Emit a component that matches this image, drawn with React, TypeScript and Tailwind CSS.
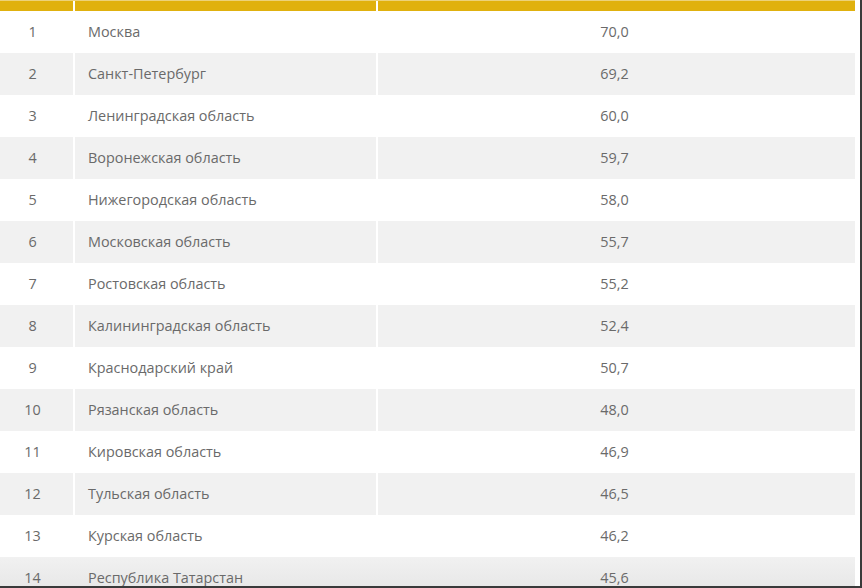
import React from 'react';

const rows: [number, string, string][] = [
  [1, 'Москва', '70,0'],
  [2, 'Санкт-Петербург', '69,2'],
  [3, 'Ленинградская область', '60,0'],
  [4, 'Воронежская область', '59,7'],
  [5, 'Нижегородская область', '58,0'],
  [6, 'Московская область', '55,7'],
  [7, 'Ростовская область', '55,2'],
  [8, 'Калининградская область', '52,4'],
  [9, 'Краснодарский край', '50,7'],
  [10, 'Рязанская область', '48,0'],
  [11, 'Кировская область', '46,9'],
  [12, 'Тульская область', '46,5'],
  [13, 'Курская область', '46,2'],
  [14, 'Республика Татарстан', '45,6'],
];

const App: React.FC = () => {
  return (
    <div className="w-[862px] h-[588px] bg-white border-r-2 border-b-2 border-[#3a3a3a] overflow-hidden font-['Open_Sans',sans-serif] text-[14.4px] text-[#6a6a6a]">
      <div className="w-[855px] flex flex-col">
        {/* header */}
        <div className="flex gap-[2px] h-[11px] border-t border-[#ecd27a]">
          <div className="w-[73px] bg-[#e0b10e]"></div>
          <div className="w-[301px] bg-[#e0b10e]"></div>
          <div className="flex-1 bg-[#e0b10e]"></div>
        </div>

        {rows.map(([n, name, val], i) => {
          const bg = i % 2 === 1 ? 'bg-[#f1f1f1]' : 'bg-white';
          const last = i === rows.length - 1;
          return (
            <div key={n} className={`flex gap-[2px] h-[42px] shrink-0 ${last ? 'bg-gradient-to-b from-[#f1f1f1] to-[#e4e4e4]' : ''}`}>
              <div className={`w-[73px] flex items-center justify-center pr-[8px] pb-[1px] ${last ? '' : bg}`}>{n}</div>
              <div className={`w-[301px] flex items-center pl-[13px] pb-[1px] ${last ? '' : bg}`}>{name}</div>
              <div className={`flex-1 flex items-center justify-center pr-[4px] pb-[1px] ${last ? '' : bg}`}>{val}</div>
            </div>
          );
        })}
      </div>
    </div>
  );
};

export default App;
